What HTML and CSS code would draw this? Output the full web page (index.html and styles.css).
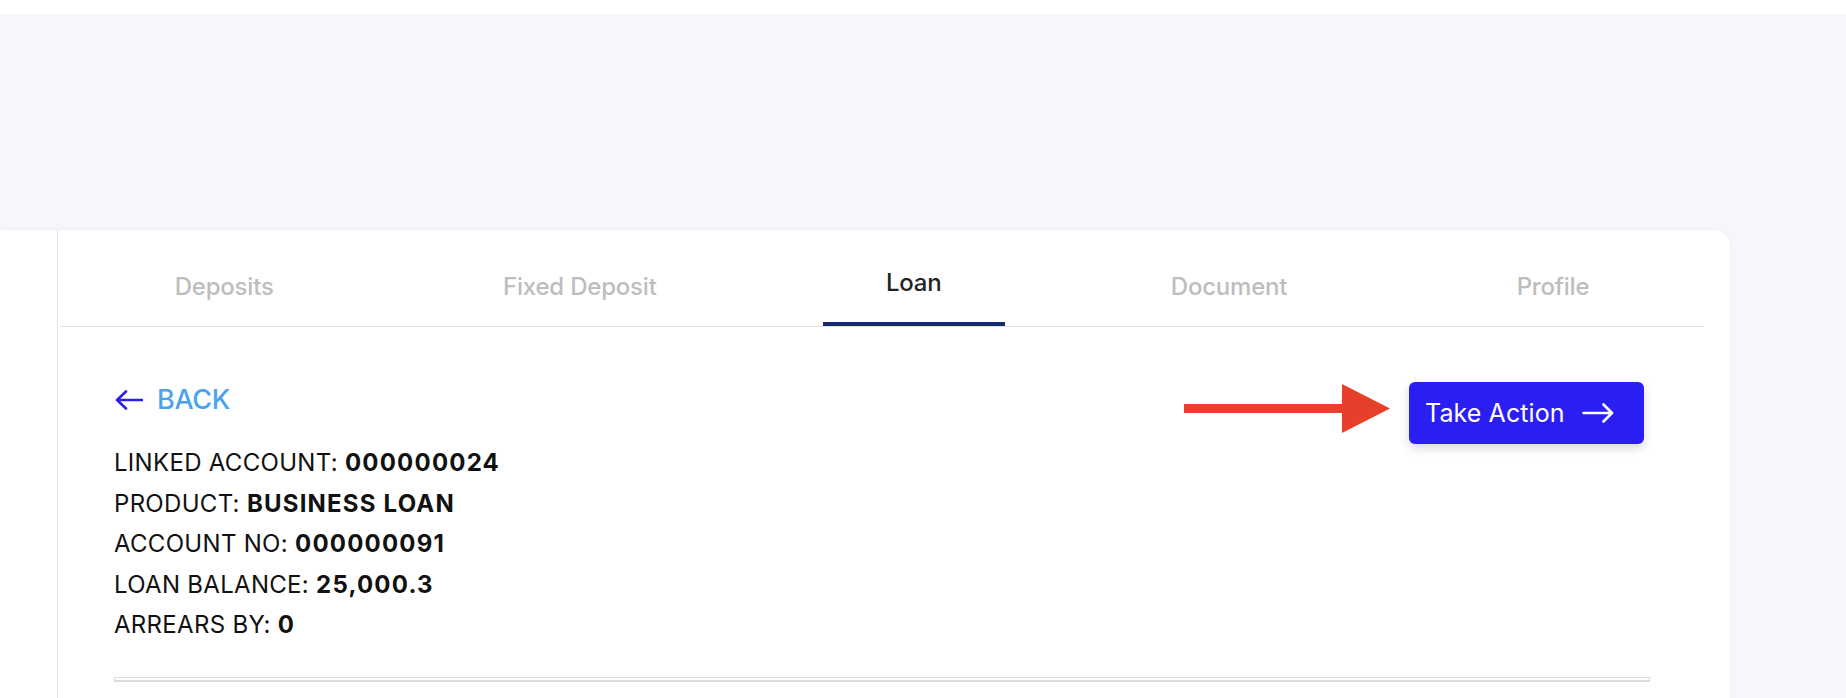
FILE: index.html
```html
<!DOCTYPE html>
<html lang="en">
<head>
<meta charset="utf-8">
<title>Loan</title>
<link rel="stylesheet" href="styles.css">
</head>
<body>
<div class="topstrip"></div>
<div class="page">
  <div class="panel">
    <div class="sidebar"></div>
    <div class="card">
      <nav class="tabs">
        <div class="tab">Deposits</div>
        <div class="tab">Fixed Deposit</div>
        <div class="tab active">Loan</div>
        <div class="tab">Document</div>
        <div class="tab">Profile</div>
      </nav>
      <div class="content">
        <div class="top-row">
          <div class="left">
            <a class="back-link" href="#">
              <svg class="back-arrow" width="28" height="20" viewBox="0 0 28 20" fill="none">
                <path d="M27 10H2M11 1.5L2 10l9 8.5" stroke="#2d1fe6" stroke-width="2.6" stroke-linecap="round" stroke-linejoin="round"/>
              </svg>
              <span>BACK</span>
            </a>
            <div class="info">
              <div class="line">LINKED ACCOUNT: <b>000000024</b></div>
              <div class="line">PRODUCT: <b>BUSINESS LOAN</b></div>
              <div class="line">ACCOUNT NO: <b>000000091</b></div>
              <div class="line">LOAN BALANCE: <b>25,000.3</b></div>
              <div class="line">ARREARS BY: <b>0</b></div>
            </div>
          </div>
          <div class="right">
            <svg class="pointer" width="206" height="49" viewBox="0 0 206 49">
              <rect x="0" y="20" width="160" height="9" fill="#e6402a"/>
              <polygon points="158,0 206,24.5 158,49" fill="#e6402a"/>
            </svg>
            <button class="action-btn" type="button">
              <span>Take Action</span>
              <svg width="32" height="20" viewBox="0 0 32 20" fill="none">
                <path d="M1.5 10H30M21.5 1.5L30 10l-8.5 8.5" stroke="#fff" stroke-width="2.6" stroke-linecap="round" stroke-linejoin="round"/>
              </svg>
            </button>
          </div>
        </div>
        <div class="table-box"></div>
      </div>
    </div>
  </div>
</div>
</body>
</html>
```
FILE: styles.css
```css
* { box-sizing: border-box; }
html, body { margin: 0; padding: 0; }
body {
  background: #ffffff;
  font-family: "Inter", "Liberation Sans", sans-serif;
  color: #111;
  overflow: hidden;
  height: 698px;
}
.topstrip { height: 14px; background: #ffffff; }
.page {
  background: #f6f7fb;
  padding-top: 216px;
  height: 684px;
}
.panel {
  display: flex;
  width: 1730px;
  height: 100%;
  background: #ffffff;
  border-top-right-radius: 16px;
  box-shadow: 0 0 6px rgba(20, 30, 80, 0.04);
}
.sidebar {
  width: 58px;
  flex: none;
  border-right: 1px solid #e2e2e4;
}
.card { flex: 1; min-width: 0; }
.tabs {
  display: flex;
  justify-content: space-around;
  margin: 0 26px 0 2px;
  border-bottom: 1px solid #e3e3e6;
}
.tab {
  font-size: 24px;
  line-height: 24px;
  font-weight: 500;
  color: #bdbdbd;
  padding: 45px 63px 23px;
  border-bottom: 4px solid transparent;
  letter-spacing: -0.2px;
}
.tab.active {
  color: #222;
  padding-top: 41px;
  padding-bottom: 27px;
  border-bottom-color: #142a6c;
}
.content { padding: 55px 80px 0 56px; }
.top-row {
  display: flex;
  justify-content: space-between;
  align-items: flex-start;
}
.back-link {
  display: flex;
  align-items: center;
  gap: 14px;
  margin-top: 4px;
  margin-left: 1px;
  height: 27px;
  font-size: 27px;
  line-height: 27px;
  font-weight: 500;
  color: #4ba3ef;
  text-decoration: none;
  letter-spacing: -0.3px;
}
.back-arrow { flex: none; }
.info {
  margin-top: 30px;
  font-size: 24px;
  line-height: 40.5px;
  letter-spacing: 0.3px;
}
.info b { font-weight: 700; letter-spacing: 1.2px; }
.right {
  display: flex;
  align-items: flex-start;
  gap: 19px;
  margin-right: 6px;
}
.pointer { margin-top: 2px; flex: none; }
.action-btn {
  display: flex;
  align-items: center;
  gap: 17px;
  width: 235px;
  height: 62px;
  padding: 0 0 0 16px;
  border: none;
  border-radius: 6px;
  background: #2b1ef3;
  color: #ffffff;
  font-family: "Inter", "Liberation Sans", sans-serif;
  font-size: 25px;
  font-weight: 400;
  letter-spacing: 0.1px;
  box-shadow: 0 4px 10px rgba(30, 30, 90, 0.18);
}
.table-box {
  margin-top: 31px;
  height: 5px;
  border: 1px solid #dcdcdc;
  border-bottom-width: 2px;
}
```
